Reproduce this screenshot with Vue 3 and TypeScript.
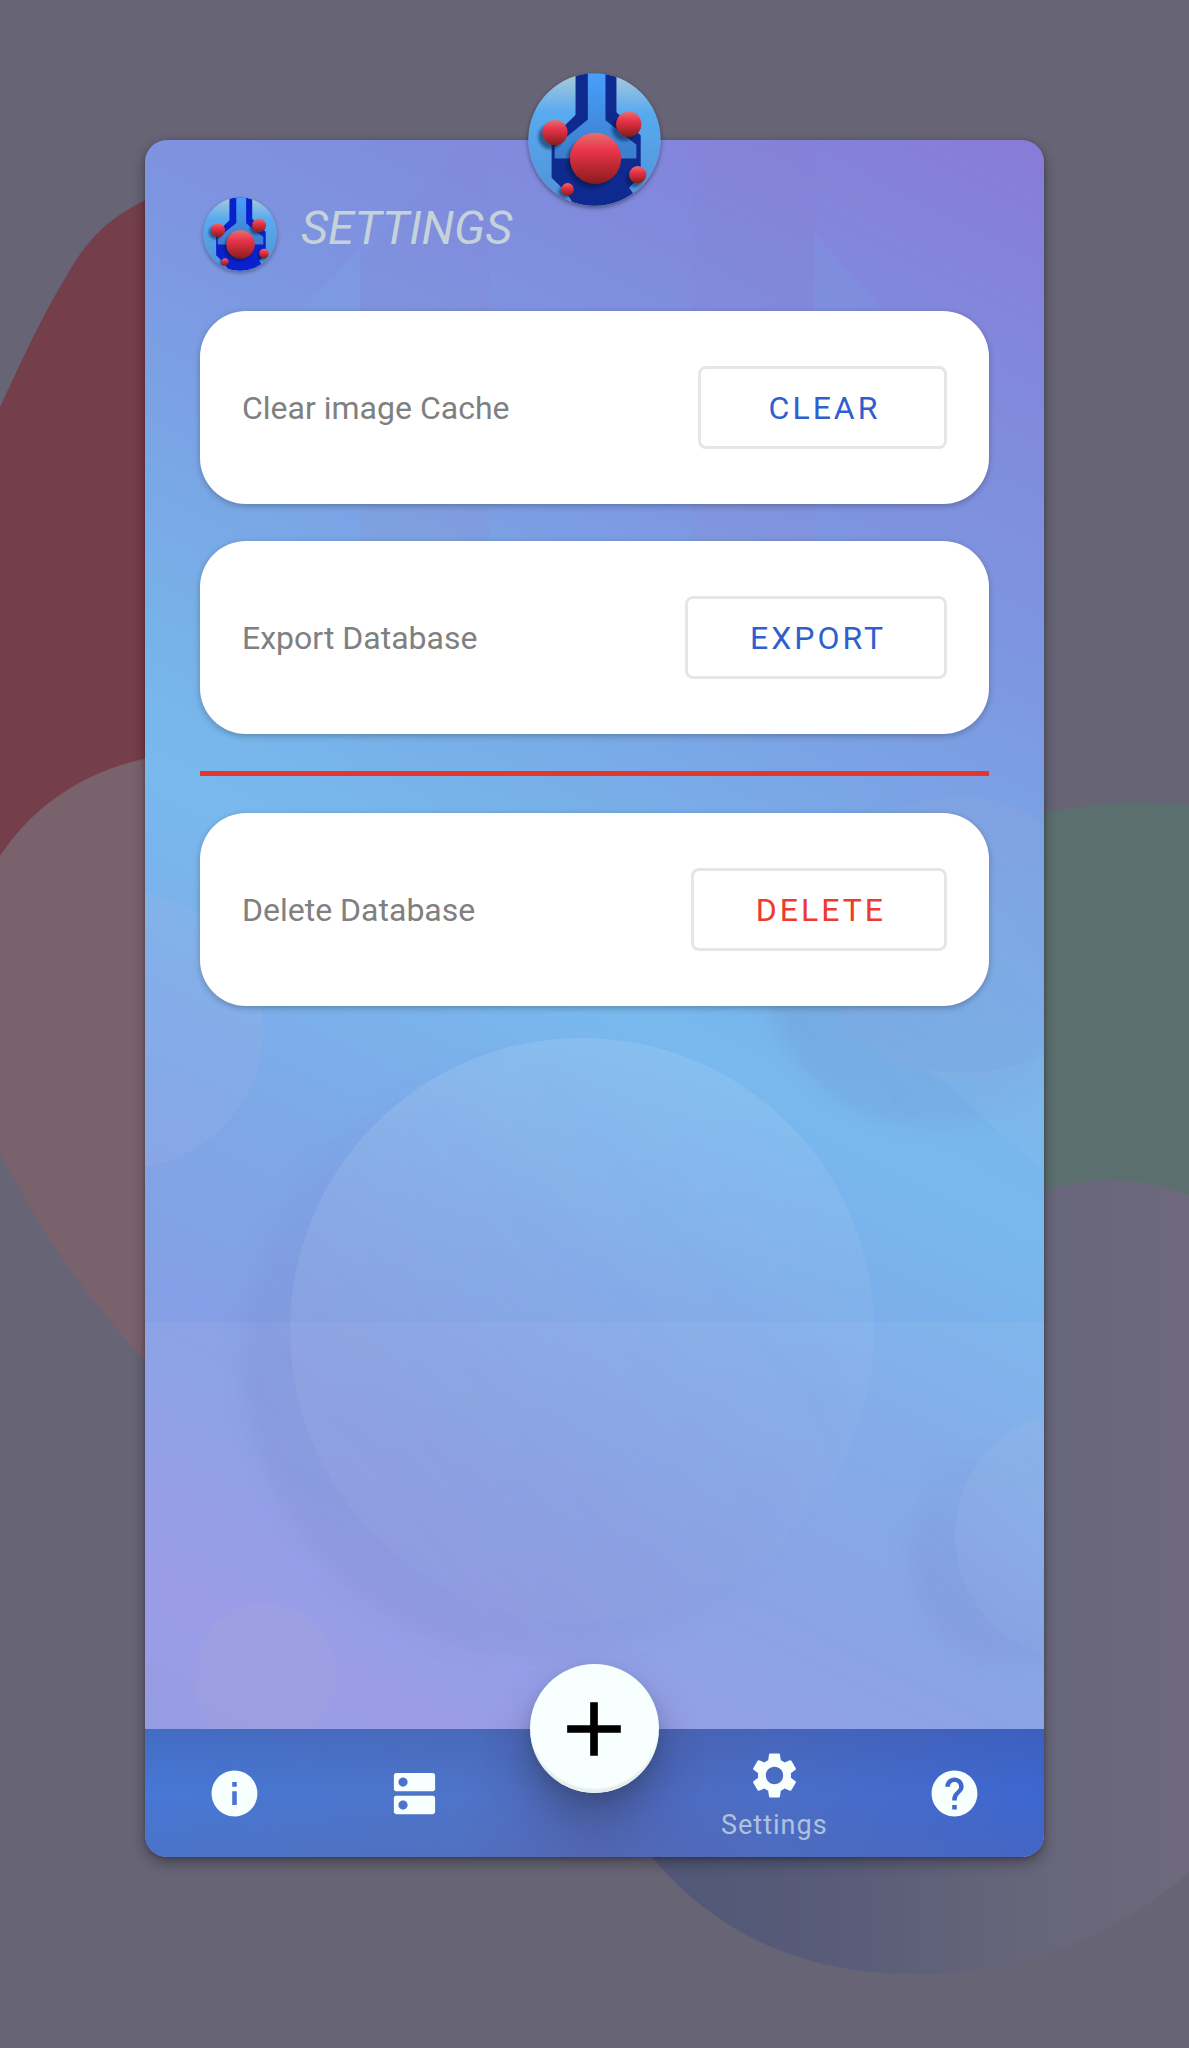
<script setup lang="ts">
import { ref } from 'vue'

interface SettingRow {
  id: string
  label: string
  action: string
  danger: boolean
}

interface NavItem {
  id: string
  label: string
  path: string
}

const safeRows: SettingRow[] = [
  { id: 'cache', label: 'Clear image Cache', action: 'CLEAR', danger: false },
  { id: 'export', label: 'Export Database', action: 'EXPORT', danger: false },
]

const dangerRows: SettingRow[] = [
  { id: 'delete', label: 'Delete Database', action: 'DELETE', danger: true },
]

const leftNav: NavItem[] = [
  {
    id: 'info',
    label: 'Info',
    path: 'M12 2C6.48 2 2 6.48 2 12s4.48 10 10 10 10-4.48 10-10S17.52 2 12 2zm1 15h-2v-6h2v6zm0-8h-2V7h2v2z',
  },
  {
    id: 'storage',
    label: 'Databases',
    path: 'M20 13H4c-.55 0-1 .45-1 1v6c0 .55.45 1 1 1h16c.55 0 1-.45 1-1v-6c0-.55-.45-1-1-1zM7 19c-1.1 0-2-.9-2-2s.9-2 2-2 2 .9 2 2-.9 2-2 2zM20 3H4c-.55 0-1 .45-1 1v6c0 .55.45 1 1 1h16c.55 0 1-.45 1-1V4c0-.55-.45-1-1-1zM7 9c-1.1 0-2-.9-2-2s.9-2 2-2 2 .9 2 2-.9 2-2 2z',
  },
]

const rightNav: NavItem[] = [
  {
    id: 'settings',
    label: 'Settings',
    path: 'M19.14 12.94c.04-.3.06-.61.06-.94 0-.32-.02-.64-.07-.94l2.03-1.58c.18-.14.23-.41.12-.61l-1.92-3.32c-.12-.22-.37-.29-.59-.22l-2.39.96c-.5-.38-1.03-.7-1.62-.94l-.36-2.54c-.04-.24-.24-.41-.48-.41h-3.84c-.24 0-.43.17-.47.41l-.36 2.54c-.59.24-1.13.57-1.62.94l-2.39-.96c-.22-.08-.47 0-.59.22L2.74 8.87c-.12.21-.08.47.12.61l2.03 1.58c-.05.3-.09.63-.09.94s.02.64.07.94l-2.03 1.58c-.18.14-.23.41-.12.61l1.92 3.32c.12.22.37.29.59.22l2.39-.96c.5.38 1.03.7 1.62.94l.36 2.54c.05.24.24.41.48.41h3.84c.24 0 .44-.17.47-.41l.36-2.54c.59-.24 1.13-.56 1.62-.94l2.39.96c.22.08.47 0 .59-.22l1.92-3.32c.12-.22.07-.47-.12-.61l-2.01-1.58zM12 15.8c-2.1 0-3.8-1.7-3.8-3.8s1.7-3.8 3.8-3.8 3.8 1.7 3.8 3.8-1.7 3.8-3.8 3.8z',
  },
  {
    id: 'help',
    label: 'Help',
    path: 'M12 2C6.48 2 2 6.48 2 12s4.48 10 10 10 10-4.48 10-10S17.52 2 12 2zm1 17h-2v-2h2v2zm2.07-7.75l-.9.92C13.45 12.9 13 13.5 13 15h-2v-.5c0-1.1.45-2.1 1.17-2.83l1.24-1.26c.37-.36.59-.86.59-1.41 0-1.1-.9-2-2-2s-2 .9-2 2H8c0-2.21 1.79-4 4-4s4 1.79 4 4c0 .88-.36 1.68-.93 2.25z',
  },
]

const active = ref('settings')
</script>

<template>
  <div class="page">
    <svg class="backdrop" viewBox="0 0 1189 2048" preserveAspectRatio="none" aria-hidden="true">
      <defs>
        <linearGradient id="bd-indigo" gradientUnits="userSpaceOnUse" x1="650" y1="0" x2="1189" y2="0">
          <stop offset="0" stop-color="#515777" />
          <stop offset="0.3" stop-color="#575b78" />
          <stop offset="0.75" stop-color="#68667a" />
          <stop offset="1" stop-color="#6e697d" />
        </linearGradient>
        <linearGradient id="lg-sky" x1="0" y1="0" x2="0" y2="1">
          <stop offset="0" stop-color="#adcbd8" />
          <stop offset="0.3" stop-color="#58aaf0" />
          <stop offset="1" stop-color="#5090d4" />
        </linearGradient>
        <linearGradient id="lg-core" x1="0" y1="0" x2="0" y2="1">
          <stop offset="0" stop-color="#4a9ffb" />
          <stop offset="1" stop-color="#3c7dcb" />
        </linearGradient>
        <linearGradient id="lg-ball" x1="0" y1="0" x2="0" y2="1">
          <stop offset="0" stop-color="#e5706c" />
          <stop offset="0.35" stop-color="#ea344c" />
          <stop offset="1" stop-color="#891b1a" />
        </linearGradient>
        <filter id="lg-soft" x="-30%" y="-30%" width="160%" height="160%">
          <feGaussianBlur stdDeviation="5" />
        </filter>
        <clipPath id="lg-clip"><circle cx="200" cy="200" r="199" /></clipPath>
        <symbol id="logo" viewBox="0 0 400 400">
          <g clip-path="url(#lg-clip)">
            <rect width="400" height="400" fill="url(#lg-sky)" />
            <path
              d="M143 0V126L71 196V315L115 358L140 400H300L316 362L304 345L339 308V188L266 118V0Z"
              fill="currentColor"
            />
            <path d="M180 0V140L80 222V257H326V216L233 142V0Z" fill="url(#lg-core)" />
            <g fill="#04103c" fill-opacity="0.5" filter="url(#lg-soft)">
              <circle cx="68" cy="192" r="37" />
              <circle cx="290" cy="167" r="37" />
              <circle cx="192" cy="269" r="76" />
              <circle cx="320" cy="318" r="25" />
              <circle cx="110" cy="358" r="18" />
            </g>
            <g fill="url(#lg-ball)">
              <circle cx="81" cy="179" r="38" />
              <circle cx="303" cy="154" r="38" />
              <circle cx="203" cy="257" r="77" />
              <circle cx="330" cy="306" r="26" />
              <circle cx="119" cy="350" r="19" />
            </g>
          </g>
        </symbol>
      </defs>
      <path d="M0 407C22 360 43 314 67 275C88 238 112 212 165 192V900H0Z" fill="#753e4b" />
      <path d="M0 856C35 803 90 766 165 755V1382C95 1310 40 1235 0 1150Z" fill="#7a626c" />
      <path d="M1020 820Q1100 795 1189 805V1300H1020Z" fill="#5b6f6e" />
      <path
        d="M1020 1202Q1100 1162 1189 1195V1872C1120 1935 1020 1974 915 1974C800 1974 715 1932 652 1857L620 1800H1020Z"
        fill="url(#bd-indigo)"
      />
    </svg>

    <div class="panel">
      <svg class="art" viewBox="0 0 899 1717" preserveAspectRatio="none" aria-hidden="true">
        <defs>
          <linearGradient id="art-light" x1="0.4" y1="0" x2="0.6" y2="1">
            <stop offset="0" stop-color="#fff" stop-opacity="0.11" />
            <stop offset="0.5" stop-color="#d8dcf0" stop-opacity="0.08" />
            <stop offset="1" stop-color="#b8bcd8" stop-opacity="0.03" />
          </linearGradient>
          <linearGradient id="art-glint" x1="0" y1="0" x2="0" y2="1">
            <stop offset="0" stop-color="#c0c4d8" stop-opacity="0.1" />
            <stop offset="1" stop-color="#fff" stop-opacity="0.02" />
          </linearGradient>
          <linearGradient id="art-shade" x1="0.8" y1="0.25" x2="0.2" y2="0.75">
            <stop offset="0" stop-color="#6a70b4" stop-opacity="0" />
            <stop offset="0.3" stop-color="#6a70b4" stop-opacity="0.03" />
            <stop offset="1" stop-color="#6a70b4" stop-opacity="0.14" />
          </linearGradient>
          <linearGradient id="art-band" x1="0" y1="0" x2="0" y2="1">
            <stop offset="0" stop-color="#8a5aa8" stop-opacity="0.03" />
            <stop offset="0.6" stop-color="#9a80b8" stop-opacity="0.1" />
            <stop offset="1" stop-color="#9aa0d8" stop-opacity="0" />
          </linearGradient>
          <filter id="art-soft" x="-20%" y="-20%" width="140%" height="140%">
            <feGaussianBlur stdDeviation="10" />
          </filter>
        </defs>
        <path d="M215 120L320 0H345V670H215Z" fill="url(#art-band)" />
        <path d="M155 171L215 110V171Z" fill="#7ab4ea" fill-opacity="0.15" />
        <path d="M547 0H669V670H547Z" fill="url(#art-band)" />
        <path d="M669 92L740 171H669Z" fill="#78a0e8" fill-opacity="0.2" />
        <path d="M0 1182H899V1590H0Z" fill="#fff" fill-opacity="0.05" />
        <g filter="url(#art-soft)">
          <circle cx="780" cy="824" r="162" fill="url(#art-shade)" />
          <circle cx="397" cy="1218" r="300" fill="url(#art-shade)" />
          <circle cx="875" cy="1415" r="112" fill="url(#art-shade)" />
        </g>
        <circle cx="-20" cy="890" r="138" fill="#b8bcea" fill-opacity="0.13" />
        <circle cx="815" cy="798" r="142" fill="#a0a8d8" fill-opacity="0.13" />
        <path d="M785 930L899 1032V914Q850 940 785 930Z" fill="#fff" fill-opacity="0.04" />
        <circle cx="437" cy="1190" r="292" fill="url(#art-light)" />
        <circle cx="935" cy="1395" r="125" fill="url(#art-glint)" />
        <circle cx="120" cy="1535" r="72" fill="#a8a8d0" fill-opacity="0.2" />
      </svg>

      <svg class="badge" aria-hidden="true"><use href="#logo" /></svg>

      <header class="head">
        <svg class="mark" aria-hidden="true"><use href="#logo" /></svg>
        <h1>SETTINGS</h1>
      </header>

      <main class="list">
        <section v-for="row in safeRows" :key="row.id" class="card">
          <span :id="row.id" class="label">{{ row.label }}</span>
          <button type="button" class="action" :aria-describedby="row.id">{{ row.action }}</button>
        </section>
        <hr class="rule" />
        <section v-for="row in dangerRows" :key="row.id" class="card">
          <span :id="row.id" class="label">{{ row.label }}</span>
          <button type="button" class="action" :class="{ danger: row.danger }" :aria-describedby="row.id">
            {{ row.action }}
          </button>
        </section>
      </main>

      <nav class="bar">
        <button
          v-for="item in leftNav"
          :key="item.id"
          type="button"
          class="tab"
          :class="{ active: active === item.id }"
          :aria-label="item.label"
          @click="active = item.id"
        >
          <svg class="icon" viewBox="0 0 24 24" aria-hidden="true"><path :d="item.path" /></svg>
          <span v-if="active === item.id" class="caption">{{ item.label }}</span>
        </button>
        <div class="slot">
          <button type="button" class="fab" aria-label="Add">
            <svg viewBox="0 0 24 24" aria-hidden="true"><path d="M19 13h-6v6h-2v-6H5v-2h6V5h2v6h6v2z" /></svg>
          </button>
        </div>
        <button
          v-for="item in rightNav"
          :key="item.id"
          type="button"
          class="tab"
          :class="{ active: active === item.id }"
          :aria-label="item.label"
          @click="active = item.id"
        >
          <svg class="icon" viewBox="0 0 24 24" aria-hidden="true"><path :d="item.path" /></svg>
          <span v-if="active === item.id" class="caption">{{ item.label }}</span>
        </button>
      </nav>
    </div>
  </div>
</template>

<style>
body {
  margin: 0;
}
</style>

<style scoped>
.page {
  position: relative;
  box-sizing: border-box;
  min-height: 100vh;
  padding: 140px 145px 191px;
  display: flex;
  background: #666475;
  font-family: Roboto, "Liberation Sans", sans-serif;
}

.backdrop,
.art {
  position: absolute;
  inset: 0;
  width: 100%;
  height: 100%;
}

.panel {
  position: relative;
  flex: 1;
  min-width: 0;
  display: flex;
  flex-direction: column;
  border-radius: 22px;
  background: linear-gradient(
    207deg,
    #887bd7 0%,
    #8189dd 12%,
    #7d97e1 25%,
    #77b3ea 44%,
    #78b9ee 50%,
    #7ea8e8 63%,
    #859fe5 74%,
    #9697e7 87%,
    #9197e3 94%,
    #8c96e0 100%
  );
  box-shadow: 0 6px 14px rgba(0, 0, 0, 0.3), 0 1px 4px rgba(0, 0, 0, 0.2);
}

.art {
  border-radius: 22px;
}

.badge {
  position: absolute;
  top: -67px;
  left: 50%;
  width: 133px;
  height: 133px;
  margin-left: -67px;
  border-radius: 50%;
  color: #0f2a8e;
  box-shadow: 0 2px 4px rgba(0, 0, 0, 0.4);
}

.head {
  position: relative;
  display: flex;
  align-items: flex-start;
  gap: 24px;
  padding: 57px 58px 40px;
}

.mark {
  flex: none;
  width: 74px;
  height: 74px;
  border-radius: 50%;
  color: #0a20cc;
  box-shadow: 0 2px 4px rgba(0, 0, 0, 0.35);
}

h1 {
  margin: 0;
  color: #c5d2da;
  font-size: 47px;
  font-style: italic;
  font-weight: 400;
  line-height: 62px;
}

.list {
  position: relative;
  flex: 1;
  padding: 0 55px 80px;
  display: flex;
  flex-direction: column;
  gap: 37px;
}

.card {
  box-sizing: border-box;
  min-height: 193px;
  padding: 0 42px;
  display: flex;
  align-items: center;
  justify-content: space-between;
  border-radius: 46px;
  background: #fff;
  box-shadow: 0 2px 6px rgba(0, 0, 0, 0.25);
}

.label {
  color: #808080;
  font-size: 32px;
  line-height: 40px;
}

.action {
  box-sizing: border-box;
  min-width: 249px;
  height: 83px;
  padding: 0 58px 0 62px;
  border: 3px solid #e6e6e6;
  border-radius: 8px;
  background: #fff;
  color: #2f5fcd;
  font-family: inherit;
  font-size: 32px;
  font-weight: 400;
  letter-spacing: 3px;
}

.action.danger {
  color: #ee3a2e;
}

.rule {
  width: 100%;
  height: 5px;
  margin: 0;
  border: 0;
  background: #e6352b;
}

.bar {
  position: relative;
  height: 128px;
  display: flex;
  border-radius: 0 0 22px 22px;
  background:
    linear-gradient(180deg, rgba(60, 80, 150, 0.3), rgba(60, 80, 150, 0) 50%, rgba(90, 100, 160, 0.25)),
    linear-gradient(90deg, #4678d6, #4e74c9 35%, #5068ba 50%, #4a6ec8 70%, #3d66d0);
}

.tab,
.slot {
  flex: 1 1 0;
  min-width: 0;
  display: flex;
  flex-direction: column;
  align-items: center;
  justify-content: center;
}

.tab {
  padding: 0;
  border: 0;
  background: none;
  color: #f7ffff;
  font-family: inherit;
}

.tab.active {
  padding-top: 4px;
}

.icon {
  width: 55px;
  height: 55px;
  fill: currentColor;
}

.caption {
  margin-top: 4px;
  color: #b0c1da;
  font-size: 27px;
  line-height: 36px;
  letter-spacing: 1px;
}

.slot {
  justify-content: flex-start;
}

.fab {
  flex: none;
  width: 129px;
  height: 129px;
  margin-top: -65px;
  padding: 0;
  display: grid;
  place-items: center;
  border: 0;
  border-radius: 50%;
  background: #f7ffff;
  box-shadow:
    inset 0 -5px 2px -1px #e6eeec,
    0 6px 14px rgba(0, 0, 30, 0.1),
    0 26px 44px rgba(40, 50, 70, 0.4);
}

.fab svg {
  width: 92px;
  height: 92px;
  fill: #000;
}
</style>
